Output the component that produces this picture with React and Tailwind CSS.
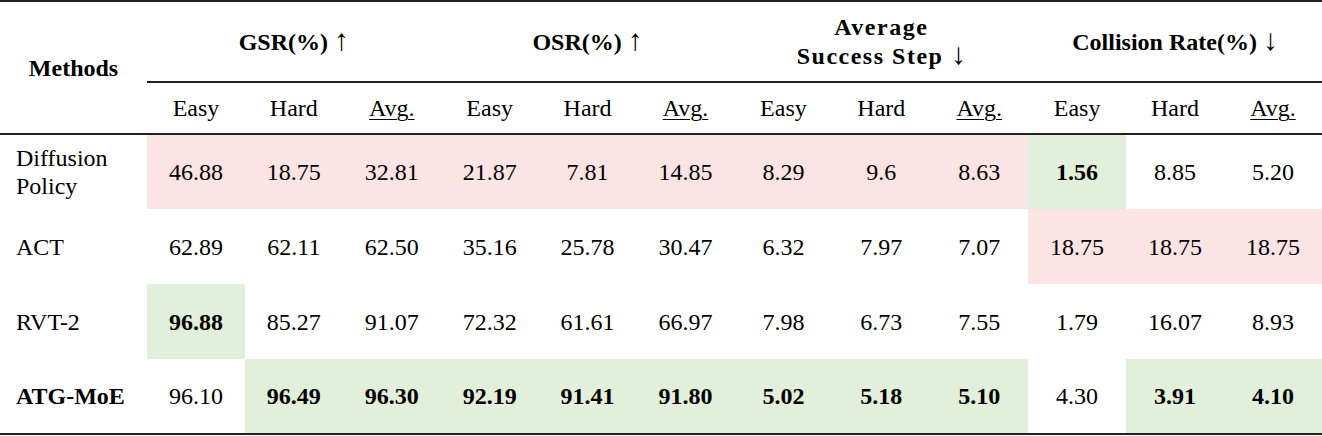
import React from "react";

const rows = [
  {
    name: ["Diffusion", "Policy"],
    bold: false,
    h: "h-[74px]",
    cells: [
      ["46.88", "p"], ["18.75", "p"], ["32.81", "p"],
      ["21.87", "p"], ["7.81", "p"], ["14.85", "p"],
      ["8.29", "p"], ["9.6", "p"], ["8.63", "p"],
      ["1.56", "g"], ["8.85", ""], ["5.20", ""],
    ],
  },
  {
    name: ["ACT"],
    bold: false,
    h: "h-[75px]",
    cells: [
      ["62.89", ""], ["62.11", ""], ["62.50", ""],
      ["35.16", ""], ["25.78", ""], ["30.47", ""],
      ["6.32", ""], ["7.97", ""], ["7.07", ""],
      ["18.75", "p"], ["18.75", "p"], ["18.75", "p"],
    ],
  },
  {
    name: ["RVT-2"],
    bold: false,
    h: "h-[75px]",
    cells: [
      ["96.88", "g"], ["85.27", ""], ["91.07", ""],
      ["72.32", ""], ["61.61", ""], ["66.97", ""],
      ["7.98", ""], ["6.73", ""], ["7.55", ""],
      ["1.79", ""], ["16.07", ""], ["8.93", ""],
    ],
  },
  {
    name: ["ATG-MoE"],
    bold: true,
    h: "h-[74px]",
    cells: [
      ["96.10", ""], ["96.49", "g"], ["96.30", "g"],
      ["92.19", "g"], ["91.41", "g"], ["91.80", "g"],
      ["5.02", "g"], ["5.18", "g"], ["5.10", "g"],
      ["4.30", ""], ["3.91", "g"], ["4.10", "g"],
    ],
  },
];

const cellStyle = {
  p: "bg-[#fde4e4] font-normal",
  g: "bg-[#e2efda] font-bold",
  "": "bg-white font-normal",
};

const sub = ["Easy", "Hard", "Avg."];

function Arrow({ up }) {
  return (
    <span className="font-normal text-[30px] leading-[0] tracking-normal">
      {up ? "\u2191" : "\u2193"}
    </span>
  );
}

export default function App() {
  return (
    <div className="w-[1322px] h-[436px] bg-white text-black font-['Liberation_Serif',serif]">
      <table className="w-[1322px] table-fixed border-separate border-spacing-0 border-t-2 border-b-2 border-[#222] text-[24px]">
        <colgroup>
          <col className="w-[147px]" />
          {Array.from({ length: 12 }).map((_, i) => (
            <col key={i} />
          ))}
        </colgroup>
        <thead>
          <tr>
            <th
              rowSpan={2}
              className="border-b-2 border-[#222] text-center align-middle font-bold p-0"
            >
              Methods
            </th>
            <th colSpan={3} className="h-[81px] border-b-2 border-[#222] text-center align-middle font-bold p-0">
              GSR(%) <Arrow up />
            </th>
            <th colSpan={3} className="h-[81px] border-b-2 border-[#222] text-center align-middle font-bold p-0">
              OSR(%) <Arrow up />
            </th>
            <th colSpan={3} className="h-[81px] border-b-2 border-[#222] text-center align-middle font-bold p-0 leading-[29px] tracking-[1.5px]">
              Average
              <br />
              Success Step <Arrow />
            </th>
            <th colSpan={3} className="h-[81px] border-b-2 border-[#222] text-center align-middle font-bold p-0">
              Collision Rate(%) <Arrow />
            </th>
          </tr>
          <tr>
            {Array.from({ length: 12 }).map((_, i) => (
              <th
                key={i}
                className="h-[52px] border-b-2 border-[#222] text-center align-middle font-normal p-0"
              >
                {i % 3 === 2 ? (
                  <span className="underline underline-offset-[3px] decoration-1">{sub[i % 3]}</span>
                ) : (
                  sub[i % 3]
                )}
              </th>
            ))}
          </tr>
        </thead>
        <tbody>
          {rows.map((r, ri) => (
            <tr key={ri} className={r.h}>
              <td className={`pl-4 pr-0 py-0 text-left align-middle leading-[28px] ${r.bold ? "font-bold" : "font-normal"}`}>
                {r.name.map((n, k) => (
                  <div key={k}>{n}</div>
                ))}
              </td>
              {r.cells.map(([v, s], ci) => (
                <td key={ci} className={`p-0 text-center align-middle ${cellStyle[s]}`}>
                  {v}
                </td>
              ))}
            </tr>
          ))}
        </tbody>
      </table>
    </div>
  );
}
